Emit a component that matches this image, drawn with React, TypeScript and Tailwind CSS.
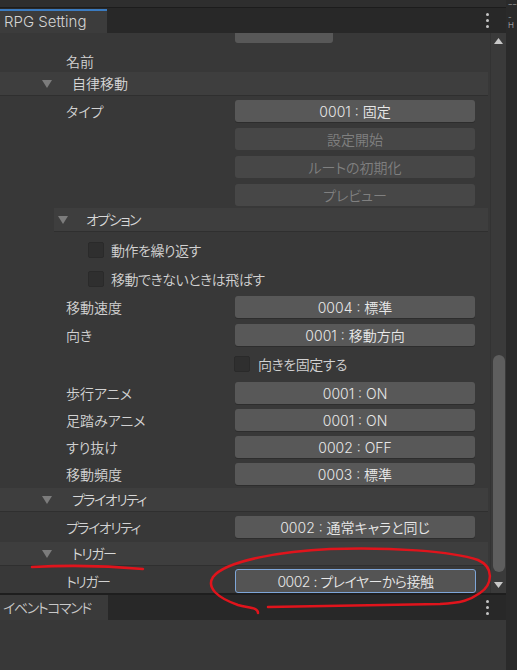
import React from 'react';

const FONT = "font-['Inter','Noto_Sans_CJK_JP',sans-serif] font-[350] [font-feature-settings:'palt']";

const Tri = () => (
  <svg width="10" height="8" viewBox="0 0 10 8" className="shrink-0">
    <polygon points="0,0 10,0 5,8" fill="#7c7c7c" />
  </svg>
);

const Kebab = () => (
  <div className="flex flex-col items-center gap-[3px]">
    <span className="w-[3px] h-[3px] rounded-full bg-[#c4c4c4]" />
    <span className="w-[3px] h-[3px] rounded-full bg-[#c4c4c4]" />
    <span className="w-[3px] h-[3px] rounded-full bg-[#c4c4c4]" />
  </div>
);

const Foldout = ({ label, sub = false, mt, tight = false }: { label: string; sub?: boolean; mt: string; tight?: boolean }) => (
  <div
    className={`${mt} h-[24px] flex items-center bg-[#3e3e3e] border-b border-[#2f2f2f] text-[14px] text-[#d8d8d8] ${
      sub ? 'ml-[54px] w-[434px] pl-[4px] gap-[18px]' : 'w-[488px] pl-[42px] gap-[20px]'
    }`}
  >
    <Tri />
    <span className={tight ? 'tracking-[-1.5px]' : ''}>{label}</span>
  </div>
);

const Btn = ({ text, disabled = false }: { text: string; disabled?: boolean }) => (
  <div
    className={`w-[240px] h-[22px] rounded-[3px] flex items-center justify-center text-[14px] ${
      disabled ? 'bg-[#474747] text-[#808080]' : 'bg-[#585858] text-[#e8e8e8] shadow-[0_1px_0_#2d2d2d]'
    }`}
  >
    {text}
  </div>
);

const Field = ({
  label = '',
  text,
  mt,
  disabled,
  tight = false,
}: {
  label?: string;
  text: string;
  mt: string;
  disabled?: boolean;
  tight?: boolean;
}) => (
  <div className={`${mt} h-[22px] flex items-center`}>
    <div className="w-[235px] pl-[66px] text-[14px] text-[#d2d2d2]">
      <span className={tight ? 'tracking-[-1.5px]' : ''}>{label}</span>
    </div>
    <Btn text={text} disabled={disabled} />
  </div>
);

const Check = ({ label, pl, gap, mt }: { label: string; pl: string; gap: string; mt: string }) => (
  <div className={`${mt} h-[22px] flex items-center ${pl} ${gap}`}>
    <div className="w-[16px] h-[16px] rounded-[2px] bg-[#2f2f2f] border border-[#2a2a2a]" />
    <span className="text-[14px] text-[#d2d2d2] tracking-[-0.5px]">{label}</span>
  </div>
);

export default function App() {
  return (
    <div className={`w-[517px] h-[670px] flex bg-[#282828] overflow-hidden relative ${FONT}`}>
      <div className="w-[506px] flex flex-col">
        {/* window top */}
        <div className="h-[7px] bg-[#2e2e2e]" />
        <div className="h-[1px] bg-[#1c1c1c]" />
        <div className="h-[25px] flex items-stretch justify-between bg-[#282828]">
          <div className="w-[107px] mt-[1px] border-t-2 border-[#3b7bc0] bg-[#3c3c3c] flex items-center pl-[4px] text-[15px] text-[#d4d4d4]">
            RPG Setting
          </div>
          <div className="flex items-center pr-[17px]">
            <Kebab />
          </div>
        </div>

        {/* inspector body */}
        <div className="h-[560px] flex bg-[#383838]">
          <div className="w-[490px] flex flex-col">
            <div className="ml-[235px] w-[98px] h-[10px] bg-[#585858] rounded-b-[3px]" />
            <div className="mt-[7px] h-[22px] flex items-center pl-[66px] text-[14px] text-[#d2d2d2]">名前</div>
            <Foldout label="自律移動" mt="mt-0" />
            <Field label="タイプ" text="0001 : 固定" mt="mt-[4px]" />
            <Field text="設定開始" mt="mt-[6px]" disabled />
            <Field text="ルートの初期化" mt="mt-[6px]" disabled />
            <Field text="プレビュー" mt="mt-[6px]" disabled />
            <Foldout label="オプション" sub mt="mt-[2px]" tight />
            <Check label="動作を繰り返す" pl="pl-[88px]" gap="gap-[7px]" mt="mt-[7px]" />
            <Check label="移動できないときは飛ばす" pl="pl-[88px]" gap="gap-[7px]" mt="mt-[7px]" />
            <Field label="移動速度" text="0004 : 標準" mt="mt-[6px]" />
            <Field label="向き" text="0001 : 移動方向" mt="mt-[6px]" />
            <Check label="向きを固定する" pl="pl-[234px]" gap="gap-[8px]" mt="mt-[7px]" />
            <Field label="歩行アニメ" text="0001 : ON" mt="mt-[7px]" />
            <Field label="足踏みアニメ" text="0001 : ON" mt="mt-[5px]" />
            <Field label="すり抜け" text="0002 : OFF" mt="mt-[5px]" />
            <Field label="移動頻度" text="0003 : 標準" mt="mt-[5px]" />
            <Foldout label="プライオリティ" mt="mt-[3px]" tight />
            <Field label="プライオリティ" text="0002 : 通常キャラと同じ" mt="mt-[4px]" tight />
            <Foldout label="トリガー" mt="mt-[4px]" tight />
            <div className="mt-[3px] h-[24px] flex items-center">
              <div className="w-[235px] pl-[66px] text-[14px] text-[#d2d2d2]">
                <span className="tracking-[-1.5px]">トリガー</span>
              </div>
              <div className="w-[241px] h-[24px] rounded-[3px] border border-[#7ea6d8] bg-[#545454] flex items-center justify-center text-[14px] text-[#e8e8e8]">
                <span className="tracking-[-0.5px]">0002 : プレイヤーから接触</span>
              </div>
            </div>
          </div>

          {/* scrollbar */}
          <div className="w-[16px] flex flex-col items-center bg-[#3a3a3a] border-l border-[#333333]">
            <div className="h-[16px] flex items-center">
              <svg width="9" height="6" viewBox="0 0 9 6">
                <polygon points="0,6 9,6 4.5,0" fill="#c8c8c8" />
              </svg>
            </div>
            <div className="flex-1 pt-[306px]">
              <div className="w-[12px] h-[217px] rounded-full bg-[#5e5e5e]" />
            </div>
            <div className="h-[16px] flex items-center">
              <svg width="9" height="6" viewBox="0 0 9 6">
                <polygon points="0,0 9,0 4.5,6" fill="#c8c8c8" />
              </svg>
            </div>
          </div>
        </div>

        {/* second window */}
        <div className="h-[2px] bg-[#1e1e1e]" />
        <div className="h-[25px] flex items-stretch justify-between bg-[#282828]">
          <div className="w-[108px] bg-[#3a3a3a] flex items-center pl-[3px] text-[14px] text-[#c8c8c8]">
            <span className="tracking-[-1.4px]">イベントコマンド</span>
          </div>
          <div className="flex items-center pr-[17px]">
            <Kebab />
          </div>
        </div>
        <div className="flex-1 bg-[#383838]" />
      </div>

      <div className="w-[1px] bg-[#4a5e5e]" />
      <div className="flex-1 bg-[#2a2a2a] pt-[4px] pl-[2px] flex flex-col gap-[1px] text-[8px] leading-none text-[#bdbdbd]">
        <span>‾‾</span>
        <span>-H</span>
      </div>

      {/* hand-drawn red marks */}
      <svg className="absolute inset-0 pointer-events-none" width="517" height="670" viewBox="0 0 517 670">
        <path d="M32 567 Q 88 564 143 569" fill="none" stroke="#e0141c" strokeWidth="2.5" strokeLinecap="round" />
        <path
          d="M258 613 C 258 607 248 608 238 605 C 218 598 206 588 213 577 C 226 560 285 551 330 549 C 390 547 452 551 478 560 C 494 567 493 584 480 593 C 470 600 462 603 440 604 L 268 607"
          fill="none"
          stroke="#e0141c"
          strokeWidth="2.5"
          strokeLinecap="round"
          strokeLinejoin="round"
        />
      </svg>
    </div>
  );
}
